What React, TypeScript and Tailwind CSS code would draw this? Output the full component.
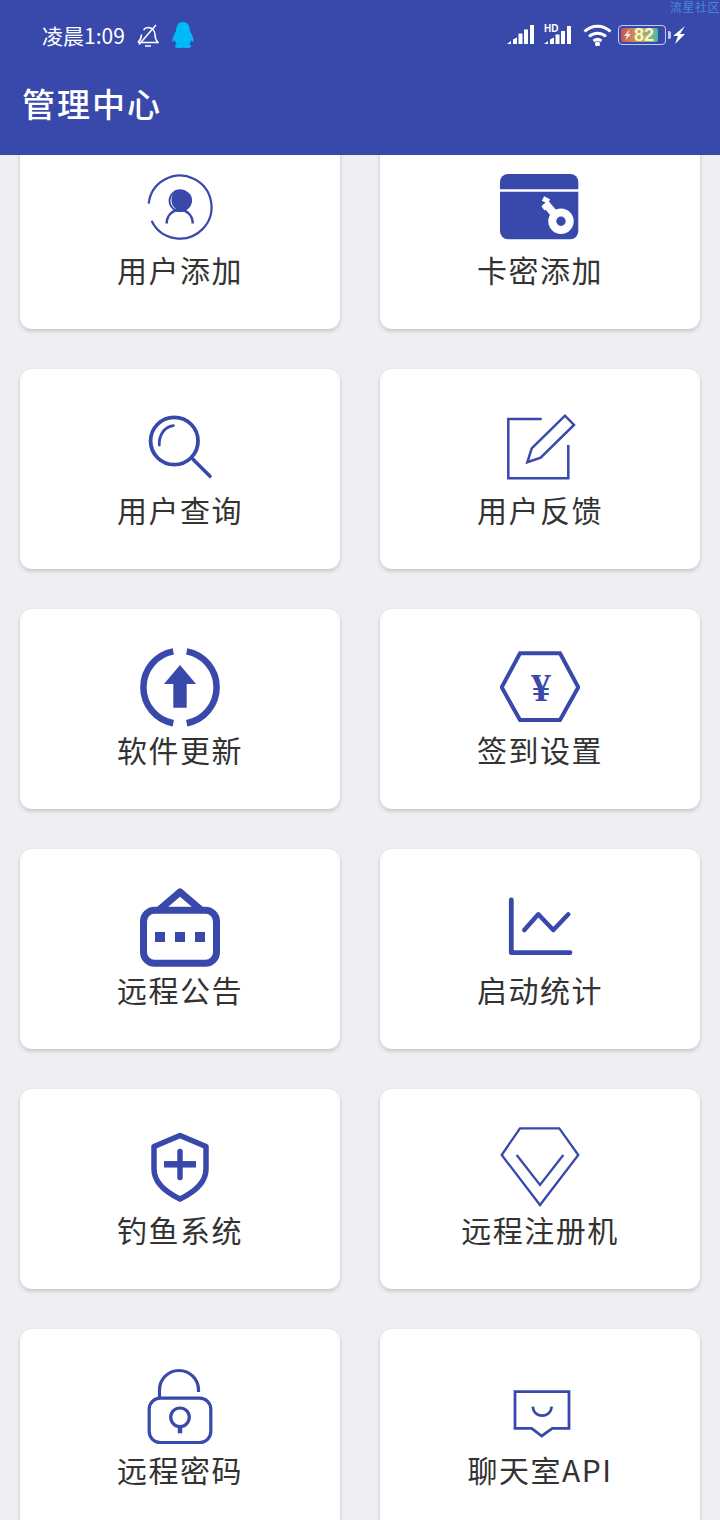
import type { ReactNode } from "react";

const INDIGO = "#3949ab";

function Icon({ children }: { children: ReactNode }) {
  return (
    <svg
      className="h-20 w-20 shrink-0"
      viewBox="0 0 80 80"
      fill="none"
      stroke={INDIGO}
      aria-hidden="true"
    >
      {children}
    </svg>
  );
}

const icons = {
  userAdd: (
    <Icon>
      <path strokeWidth={2.200} d="M8.700 36.700A31.500 31.500 0 1 1 11.600 53.700" />
      <circle cx={40} cy={33.700} r={10.500} strokeWidth={1.800} />
      <path fill={INDIGO} stroke="none" d="M31.500 33a9 9 0 0 1 9.500-9.800 10.300 10.300 0 1 1-9.500 9.800z" />
      <path strokeWidth={2.500} d="M26.700 56.500c0-8 5.500-13.500 13-13.500s13 5.500 13 13.500" />
    </Icon>
  ),
  cardKey: (
    <Icon>
      <path fill={INDIGO} stroke="none" d="M0 22.300V15a8 8 0 0 1 8-8h62.300a8 8 0 0 1 8 8v7.300z" />
      <path fill={INDIGO} stroke="none" d="M0 24.700h78.300V64.300a8 8 0 0 1-8 8H8a8 8 0 0 1-8-8z" />
      <path stroke="#fff" strokeWidth={8} d="M45 36l12 14" />
      <path stroke="#fff" strokeWidth={5} d="M49 37l-6 4.500M43 31.500l6 3" />
      <circle cx={61} cy={54.300} r={8.700} stroke="#fff" strokeWidth={8} />
    </Icon>
  ),
  search: (
    <Icon>
      <circle cx={34.300} cy={34} r={23.700} strokeWidth={3.800} />
      <path strokeWidth={2.800} strokeLinecap="round" d="M19.300 38c-.5-10 5-18 14-19.300" />
      <path strokeWidth={3.500} strokeLinecap="round" d="M52.700 52L70 69.300" />
    </Icon>
  ),
  edit: (
    <Icon>
      <path strokeWidth={2.500} d="M41.700 12H8.300v59.300h60V38" />
      <path strokeWidth={2.500} d="M27.300 55.300l4.400-14L65 8.700 74 18 40.700 50.700z" />
    </Icon>
  ),
  update: (
    <Icon>
      <path strokeWidth={6.500} d="M33.300 4.400A36.500 36.500 0 0 0 33.300 76.200M46.700 4.400A36.500 36.500 0 0 1 46.700 76.200" />
      <path fill={INDIGO} stroke="none" d="M40 18l16 19h-9.300v23.700H33.300V37H24z" />
    </Icon>
  ),
  yuan: (
    <Icon>
      <path strokeWidth={4} d="M1.700 40.300L20 6.300h40l18.300 34L60 73H20z" />
      <text
        x={41}
        y={53.700}
        textAnchor="middle"
        fontSize={40}
        fontWeight={700}
        fill={INDIGO}
        stroke="none"
        style={{ fontFamily: '"Liberation Serif", serif' }}
      >
        ¥
      </text>
    </Icon>
  ),
  notice: (
    <Icon>
      <rect x={3.500} y={23.200} width={73} height={53} rx={11} strokeWidth={7} />
      <path strokeWidth={7} strokeLinejoin="round" d="M19 23L40 5l21 18" />
      <path fill={INDIGO} stroke="none" d="M15 45h10v10H15zM35 45h10v10H35zM55 45h10v10H55z" />
    </Icon>
  ),
  chart: (
    <Icon>
      <path strokeWidth={4.800} strokeLinecap="round" strokeLinejoin="round" d="M11.300 13v52.700H70" />
      <path strokeWidth={4.500} strokeLinecap="round" strokeLinejoin="round" d="M24.300 43l14-15.700 15 15.700 15-15.700" />
    </Icon>
  ),
  shield: (
    <Icon>
      <path
        strokeWidth={5.500}
        strokeLinejoin="round"
        d="M40 8.500L14 19.500V42c0 13 11.500 23 26 30 14.500-7 26-17 26-30V19.500z"
      />
      <path strokeWidth={6.500} d="M24 37.300h32" />
      <path strokeWidth={5.500} strokeLinecap="round" d="M40 24.500v26" />
    </Icon>
  ),
  diamond: (
    <Icon>
      <path strokeWidth={2.300} d="M20 1.300h39.300l19 26.700L40 78 1.700 28z" />
      <path strokeWidth={2.300} d="M16.700 28L40 58l23.300-30" />
    </Icon>
  ),
  lock: (
    <Icon>
      <rect x={9.200} y={31.200} width={61.600} height={44.300} rx={11} strokeWidth={3.200} />
      <path strokeWidth={3.200} d="M19.500 30v-7a19.500 19.500 0 0 1 39 0v2" />
      <circle cx={40} cy={50.300} r={9.300} strokeWidth={3.200} />
      <path strokeWidth={4.500} d="M40 59v7.300" />
    </Icon>
  ),
  chat: (
    <Icon>
      <path strokeWidth={2.800} d="M15 24.700h54v36.600H52.300L41.700 69 31.700 61.300H15z" />
      <path strokeWidth={2.800} d="M32.700 39.700c.5 5 4 9 9.500 9s9-4 9.500-9" />
    </Icon>
  ),
};

const items = [
  { label: "用户添加", icon: icons.userAdd },
  { label: "卡密添加", icon: icons.cardKey },
  { label: "用户查询", icon: icons.search },
  { label: "用户反馈", icon: icons.edit },
  { label: "软件更新", icon: icons.update },
  { label: "签到设置", icon: icons.yuan },
  { label: "远程公告", icon: icons.notice },
  { label: "启动统计", icon: icons.chart },
  { label: "钓鱼系统", icon: icons.shield },
  { label: "远程注册机", icon: icons.diamond },
  { label: "远程密码", icon: icons.lock },
  { label: "聊天室API", icon: icons.chat },
];

function Signal({ hd = false }: { hd?: boolean }) {
  return (
    <svg className="h-[24px] w-[28px]" viewBox="0 0 28 24" fill="#fff" aria-hidden="true">
      {hd && (
        <text
          x={0}
          y={8.500}
          fontSize={10}
          fontWeight={700}
          style={{ fontFamily: '"Liberation Sans", sans-serif' }}
        >
          HD
        </text>
      )}
      {hd ? (
        <path d="M0 21l4-3v3zM6 16.500l4-2V21H6zM11.500 11.500h4V21h-4zM17 8h4v13h-4zM23 3h4v18h-4z" />
      ) : (
        <path d="M0 21l4-3v3zM6 16.500l4-2V21H6zM11.500 10.500h4V21h-4zM17 6.500h4V21h-4zM23 2h4v19h-4z" />
      )}
    </svg>
  );
}

function StatusBar() {
  return (
    <div className="flex h-[70px] items-center pl-[42px] text-white">
      <span className="w-[95px] text-[21px] leading-none">凌晨1:09</span>
      <svg
        className="h-[24px] w-[22px]"
        viewBox="0 0 22 24"
        fill="none"
        stroke="#fff"
        strokeWidth={1.500}
        aria-hidden="true"
      >
        <path d="M1 19.500h20c-2-2-3-4-3-8 0-4-3-7-7-7-2 0-3.500 1-4.500 2.500M4.500 11.500c0 4-1.500 6-3.500 8" />
        <path d="M2 21.500L19 2" />
        <path d="M8 23h6" />
      </svg>
      <svg className="ml-[13px] h-[26px] w-[22px]" viewBox="0 0 22 26" aria-hidden="true">
        <path
          fill="#00b9f7"
          d="M11 0c4.500 0 6.500 3.500 6.800 7.500.1 1.800.9 3 1.700 4.500 1.400 2.700 2.500 6.300 1.800 7.500-.5.600-1.500-.3-2.200-1.200-.3 1.700-1 3-2 4 1.300.6 2.200 1.300 2 2.200-.3 1-2.500 1.500-5 1.500-1.200 0-2.400-.2-3.100-.6-.7.4-1.900.6-3.100.6-2.500 0-4.700-.5-5-1.500-.2-.9.7-1.600 2-2.200-1-1-1.700-2.300-2-4-.7.9-1.700 1.800-2.200 1.200-.7-1.200.4-4.800 1.800-7.500.8-1.500 1.600-2.700 1.700-4.500C4.500 3.500 6.500 0 11 0z"
        />
      </svg>
      <div className="ml-auto flex items-center pr-[34px]">
        <Signal />
        <div className="w-[9px]" />
        <Signal hd />
        <svg
          className="ml-[11px] h-[22px] w-[29px]"
          viewBox="0 0 29 22"
          fill="none"
          stroke="#fff"
          strokeWidth={3}
          aria-hidden="true"
        >
          <path d="M1.500 7.500c7.500-7 18.500-7 26 0M6 12.500c5-4.500 12-4.500 17 0M10.500 17c2.500-2 5.500-2 8 0" />
          <circle cx={14.500} cy={20} r={1} fill="#fff" />
        </svg>
        <div className="ml-[6px] flex h-[20px] w-[48px] items-center rounded-[4px] border border-[#c3cbee] p-[2px]">
          <div className="flex h-full w-[37px] items-center gap-[1px] rounded-[2px] bg-gradient-to-r from-[#c8505a] via-[#c9a455] to-[#3fb8a4] pl-[1px]">
            <svg className="h-[12px] w-[11px]" viewBox="0 0 11 12" fill="#f8e6d8" aria-hidden="true">
              <path d="M8 0L2 7h3l-2 5 6-7H6z" />
            </svg>
            <span className="text-[18px] leading-none font-bold text-[#f6f8c8] [font-family:'Liberation_Sans',sans-serif]">
              82
            </span>
          </div>
        </div>
        <div className="ml-[2px] h-[8px] w-[3px] rounded-r-[2px] bg-[#c3cbee]" />
        <svg className="ml-[1px] h-[20px] w-[14px]" viewBox="0 0 14 20" fill="#fff" aria-hidden="true">
          <path d="M13 1L1 11h5l-3 8 10-10H8z" />
        </svg>
      </div>
    </div>
  );
}

export default function App() {
  return (
    <div className="relative h-[1520px] w-[720px] overflow-hidden bg-[#eeeef3] [font-family:'Noto_Sans_CJK_SC',sans-serif]">
      <header className="relative z-10 h-[155px] bg-[#3949ab]">
        <StatusBar />
        <div className="flex h-[68px] items-center pl-[22px] text-[33px] font-medium tracking-[2px] text-white">
          管理中心
        </div>
      </header>
      <span className="absolute top-0 right-0 z-20 text-[12px] leading-[14px] tracking-[0.5px] text-[#4b86dc]">
        流星社区
      </span>
      <main className="-mt-[26px] grid grid-cols-2 gap-x-10 gap-y-10 px-5">
        {items.map((item) => (
          <div
            key={item.label}
            className="flex h-[200px] flex-col items-center rounded-xl bg-white pt-[38px] shadow-[0_2px_4px_rgba(0,0,0,0.18)]"
          >
            {item.icon}
            <span className="text-[30px] leading-[44px] tracking-[1.5px] text-[#333]">
              {item.label}
            </span>
          </div>
        ))}
      </main>
    </div>
  );
}
